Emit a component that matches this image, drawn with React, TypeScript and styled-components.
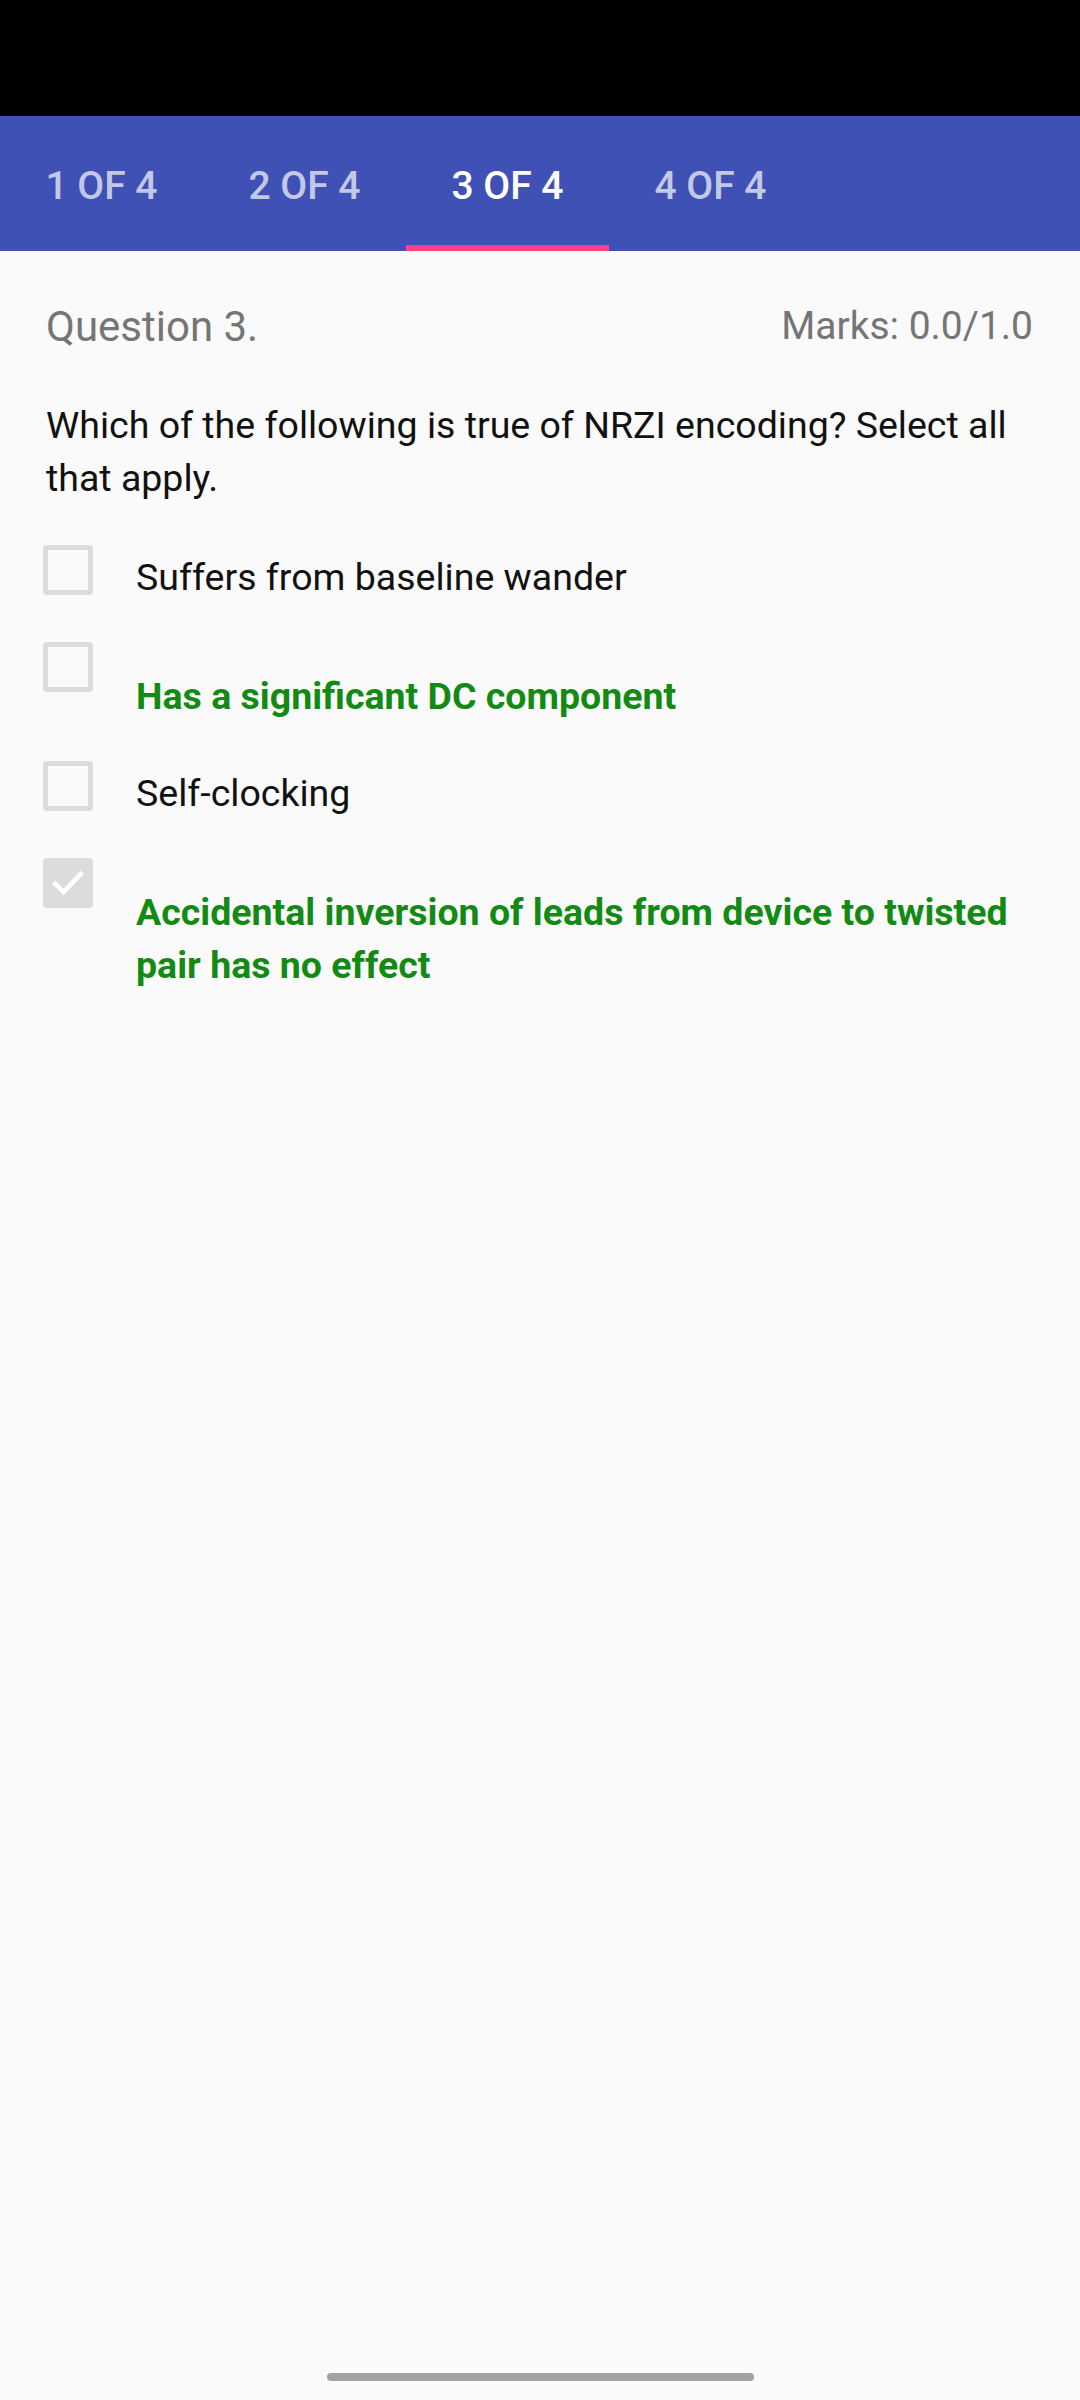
import React from "react";
import styled, { createGlobalStyle } from "styled-components";

const Global = createGlobalStyle`
  html, body { margin: 0; padding: 0; background: #fafafa; }
  body { font-family: Roboto, "Noto Sans", "Liberation Sans", sans-serif; }
  * { box-sizing: border-box; }
`;

const Screen = styled.div`
  width: 1080px;
  min-height: 2400px;
  display: flex;
  flex-direction: column;
  background: #fafafa;
`;

const StatusBar = styled.div`
  height: 116px;
  background: #000;
  flex-shrink: 0;
`;

const TabBar = styled.div`
  height: 135px;
  background: #3f51b5;
  display: flex;
  flex-shrink: 0;
`;

const Tab = styled.div<{ $active?: boolean }>`
  width: 203px;
  display: flex;
  align-items: center;
  justify-content: center;
  font-size: 39px;
  font-weight: 500;
  color: ${(p) => (p.$active ? "#ffffff" : "rgba(255,255,255,0.7)")};
  box-shadow: ${(p) => (p.$active ? "inset 0 -6px 0 #ff4081" : "none")};
  padding-top: 4px;
`;

const Content = styled.div`
  padding: 50px 47px 0 46px;
  display: flex;
  flex-direction: column;
`;

const Header = styled.div`
  display: flex;
  justify-content: space-between;
  align-items: center;
  height: 50px;
`;

const QuestionNo = styled.div`
  font-size: 42px;
  color: #757575;
`;

const Marks = styled.div`
  font-size: 39px;
  color: #757575;
`;

const Prompt = styled.div`
  margin-top: 48px;
  font-size: 37.5px;
  line-height: 53px;
  color: #111;
`;

const Options = styled.div`
  margin-top: 39.5px;
  display: flex;
  flex-direction: column;
  gap: 37.5px;
`;

const Row = styled.div`
  display: flex;
  align-items: flex-start;
  gap: 43px;
`;

const Box = styled.div<{ $checked?: boolean }>`
  flex: 0 0 50px;
  width: 50px;
  height: 50px;
  margin-left: -3px;
  border-radius: 4px;
  border: 5px solid #dcdcdc;
  background: ${(p) => (p.$checked ? "#dcdcdc" : "transparent")};
  display: flex;
  align-items: center;
  justify-content: center;
`;

const Label = styled.div<{ $correct?: boolean }>`
  margin-top: ${(p) => (p.$correct ? "28.5px" : "6.5px")};
  font-size: 37.5px;
  line-height: 53px;
  font-weight: ${(p) => (p.$correct ? 700 : 400)};
  color: ${(p) => (p.$correct ? "#138a13" : "#111")};
`;

const Spacer = styled.div`
  flex: 1;
`;

const GestureArea = styled.div`
  display: flex;
  justify-content: center;
  padding-bottom: 19px;
`;

const GestureBar = styled.div`
  width: 427px;
  height: 8px;
  border-radius: 4px;
  background: #a2a2a2;
`;

const Check = () => (
  <svg width="36" height="36" viewBox="0 0 24 24" fill="none">
    <path d="M3.5 12.5l5.5 5.5L20.5 6" stroke="#fff" strokeWidth="3" strokeLinecap="square" />
  </svg>
);

const options = [
  { text: "Suffers from baseline wander", correct: false, checked: false },
  { text: "Has a significant DC component", correct: true, checked: false },
  { text: "Self-clocking", correct: false, checked: false },
  { text: "Accidental inversion of leads from device to twisted pair has no effect", correct: true, checked: true },
];

export default function App() {
  return (
    <Screen>
      <Global />
      <StatusBar />
      <TabBar>
        {["1 OF 4", "2 OF 4", "3 OF 4", "4 OF 4"].map((t, i) => (
          <Tab key={t} $active={i === 2}>{t}</Tab>
        ))}
      </TabBar>
      <Content>
        <Header>
          <QuestionNo>Question 3.</QuestionNo>
          <Marks>Marks: 0.0/1.0</Marks>
        </Header>
        <Prompt>Which of the following is true of NRZI encoding? Select all that apply.</Prompt>
        <Options>
          {options.map((o) => (
            <Row key={o.text}>
              <Box $checked={o.checked}>{o.checked && <Check />}</Box>
              <Label $correct={o.correct}>{o.text}</Label>
            </Row>
          ))}
        </Options>
      </Content>
      <Spacer />
      <GestureArea>
        <GestureBar />
      </GestureArea>
    </Screen>
  );
}
